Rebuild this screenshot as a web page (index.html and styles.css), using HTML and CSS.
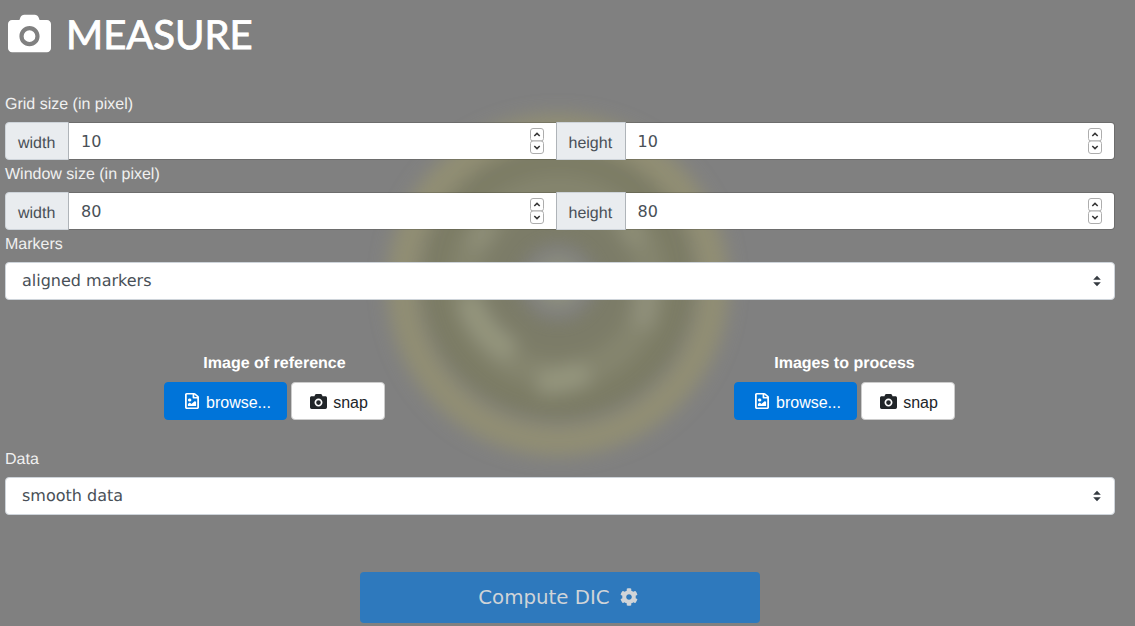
FILE: index.html
```html
<!DOCTYPE html>
<html lang="en">
<head>
<meta charset="utf-8">
<title>Measure</title>
<link rel="stylesheet" href="styles.css">
</head>
<body>
<svg class="defs" aria-hidden="true">
  <defs>
    <symbol id="i-camera" viewBox="0 0 512 512"><path d="M512 144v288c0 26.5-21.5 48-48 48H48c-26.5 0-48-21.5-48-48V144c0-26.5 21.5-48 48-48h88l12.3-32.9c7-18.7 24.9-31.1 44.9-31.1h125.5c20 0 37.9 12.4 44.9 31.1L376 96h88c26.5 0 48 21.5 48 48zM376 288c0-66.2-53.8-120-120-120s-120 53.8-120 120 53.8 120 120 120 120-53.8 120-120zM326 288a70 70 0 1 1-140 0 70 70 0 1 1 140 0z"/></symbol>
    <symbol id="i-file" viewBox="0 0 384 512" preserveAspectRatio="none"><path d="M369.9 97.9L286 14C277 5 264.8-.1 252.1-.1H48C21.5 0 0 21.5 0 48v416c0 26.5 21.5 48 48 48h288c26.5 0 48-21.5 48-48V131.9c0-12.7-5.1-25-14.1-34zM332.1 128H256V51.9l76.1 76.1zM48 464V48h160v104c0 13.3 10.7 24 24 24h104v288H48zm32-48h224V288l-23.5-23.5c-4.7-4.7-12.3-4.7-17 0L176 352l-39.5-39.5c-4.7-4.7-12.3-4.7-17 0L80 352v64zm48-240c-26.5 0-48 21.5-48 48s21.5 48 48 48 48-21.5 48-48-21.5-48-48-48z"/></symbol>
    <symbol id="i-cog" viewBox="0 0 512 512"><path d="M487.4 315.7l-42.6-24.6c4.3-23.2 4.3-47 0-70.2l42.6-24.6c4.9-2.8 7.1-8.6 5.5-14-11.1-35.6-30-67.8-54.7-94.6-3.8-4.1-10-5.1-14.8-2.3L380.8 110c-17.9-15.4-38.5-27.3-60.8-35.1V25.8c0-5.6-3.9-10.5-9.4-11.7-36.7-8.2-74.3-7.8-109.2 0-5.5 1.2-9.4 6.1-9.4 11.7V75c-22.2 7.9-42.8 19.8-60.8 35.1L88.7 85.5c-4.9-2.8-11-1.9-14.8 2.3-24.7 26.7-43.6 58.9-54.7 94.6-1.7 5.4.6 11.2 5.5 14L67.3 221c-4.3 23.2-4.3 47 0 70.2l-42.6 24.6c-4.9 2.8-7.1 8.6-5.5 14 11.1 35.6 30 67.8 54.7 94.6 3.8 4.1 10 5.1 14.8 2.3l42.6-24.6c17.9 15.4 38.5 27.3 60.8 35.1v49.2c0 5.6 3.9 10.5 9.4 11.7 36.7 8.2 74.3 7.8 109.2 0 5.5-1.2 9.4-6.1 9.4-11.7v-49.2c22.2-7.9 42.8-19.8 60.8-35.1l42.6 24.6c4.9 2.8 11 1.9 14.8-2.3 24.7-26.7 43.6-58.9 54.7-94.6 1.5-5.5-.7-11.3-5.6-14.1zM256 336c-44.1 0-80-35.9-80-80s35.9-80 80-80 80 35.9 80 80-35.9 80-80 80z"/></symbol>
    <symbol id="i-spin" viewBox="0 0 14 26">
      <rect x="0.5" y="0.5" width="13" height="12.5" rx="2.5" fill="#fff" stroke="#adadad"/>
      <rect x="0.5" y="13" width="13" height="12.5" rx="2.5" fill="#fff" stroke="#adadad"/>
      <path d="M4.3 8 7 5.4 9.7 8" fill="none" stroke="#333" stroke-width="1.5"/>
      <path d="M4.3 18 7 20.6 9.7 18" fill="none" stroke="#333" stroke-width="1.5"/>
    </symbol>
    <symbol id="i-sort" viewBox="0 0 10 12">
      <path d="M5 .8 8.8 4.8H1.2zM5 11.2 1.2 7.2H8.8z"/>
    </symbol>
    <filter id="soft" x="-20%" y="-20%" width="140%" height="140%"><feGaussianBlur stdDeviation="9"/></filter>
  </defs>
</svg>

<svg class="backdrop" viewBox="0 0 400 400" aria-hidden="true">
  <g filter="url(#soft)" fill="none">
    <circle cx="200" cy="200" r="156" stroke="#918e73" stroke-width="30"/>
    <g transform="translate(0 -3)">
      <circle cx="200" cy="200" r="122" stroke="#7c7b65" stroke-width="32"/>
      <circle cx="200" cy="200" r="92" stroke="#85856e" stroke-width="30"/>
      <circle cx="200" cy="200" r="58" stroke="#7b7c67" stroke-width="40"/>
      <circle cx="200" cy="200" r="24" fill="#8f917d"/>
      <path d="M110 215a92 92 0 0 0 45 55" stroke="#94957e" stroke-width="24"/>
      <path d="M285 195a88 88 0 0 1-2 50" stroke="#90907a" stroke-width="24"/>
      <path d="M180 300a100 100 0 0 0 50-10" stroke="#94957e" stroke-width="24"/>
      <path d="M115 165a92 92 0 0 1 20-22" stroke="#8f8f78" stroke-width="20"/>
      <path d="M265 140a92 92 0 0 1 15 22" stroke="#8f8f78" stroke-width="20"/>
    </g>
  </g>
</svg>

<main class="page">
  <h1 class="title">
    <svg class="title-icon"><use href="#i-camera"/></svg>
    <span>MEASURE</span>
  </h1>

  <label class="label">Grid size (in pixel)</label>
  <div class="group">
    <span class="addon addon-first">width</span>
    <div class="field"><input class="input" type="text" value="10"><svg class="spin"><use href="#i-spin"/></svg></div>
    <span class="addon">height</span>
    <div class="field field-last"><input class="input input-last" type="text" value="10"><svg class="spin"><use href="#i-spin"/></svg></div>
  </div>

  <label class="label">Window size (in pixel)</label>
  <div class="group">
    <span class="addon addon-first">width</span>
    <div class="field"><input class="input" type="text" value="80"><svg class="spin"><use href="#i-spin"/></svg></div>
    <span class="addon">height</span>
    <div class="field field-last"><input class="input input-last" type="text" value="80"><svg class="spin"><use href="#i-spin"/></svg></div>
  </div>

  <label class="label">Markers</label>
  <div class="select-box">
    <span>aligned markers</span>
    <svg class="sort"><use href="#i-sort"/></svg>
  </div>

  <section class="uploads">
    <div class="upload">
      <h2 class="upload-title">Image of reference</h2>
      <div class="actions">
        <button class="btn btn-blue" type="button"><svg class="btn-file"><use href="#i-file"/></svg>browse...</button>
        <button class="btn btn-white" type="button"><svg class="btn-cam"><use href="#i-camera"/></svg>snap</button>
      </div>
    </div>
    <div class="upload">
      <h2 class="upload-title">Images to process</h2>
      <div class="actions">
        <button class="btn btn-blue" type="button"><svg class="btn-file"><use href="#i-file"/></svg>browse...</button>
        <button class="btn btn-white" type="button"><svg class="btn-cam"><use href="#i-camera"/></svg>snap</button>
      </div>
    </div>
  </section>

  <label class="label">Data</label>
  <div class="select-box">
    <span>smooth data</span>
    <svg class="sort"><use href="#i-sort"/></svg>
  </div>

  <div class="submit-row">
    <button class="compute" type="button">Compute DIC<svg class="cog"><use href="#i-cog"/></svg></button>
  </div>
</main>
</body>
</html>
```

FILE: styles.css
```css
* { box-sizing: border-box; }

html, body {
  margin: 0;
  height: 100%;
  overflow: hidden;
}

body {
  position: relative;
  background: #808080;
  color: #f0f0f0;
  font-family: "Liberation Sans", Arial, sans-serif;
  font-size: 16px;
  line-height: 24px;
  text-rendering: geometricPrecision;
}

.defs { width: 0; height: 0; position: absolute; }

.backdrop {
  position: absolute;
  left: 358px;
  top: 85px;
  width: 400px;
  height: 400px;
}

.page {
  position: relative;
  width: 1110px;
  margin-left: 5px;
}

.title {
  display: flex;
  align-items: center;
  gap: 15px;
  height: 90px;
  margin: 0;
  padding: 0 0 23px 3px;
  font-family: Lato, sans-serif;
  font-size: 40px;
  font-weight: 400;
  line-height: 48px;
  color: #fff;
  -webkit-text-stroke: 0.9px #fff;
}

.title-icon { width: 43px; height: 43px; fill: #fff; }

.label {
  display: block;
  height: 24px;
  margin-bottom: 8px;
  padding-top: 3px;
  font-size: 16px;
}

.group { display: flex; height: 38px; }

.addon {
  display: flex;
  align-items: center;
  width: 70px;
  padding: 5px 12px 0;
  background: #e9ecef;
  border: 1px solid #ced4da;
  color: #495057;
}

.addon-first { width: 64px; border-radius: 4px 0 0 4px; }

.field { position: relative; flex: 1 1 0; margin: 0 -1px; min-width: 0; z-index: 1; }
.field-last { flex-basis: 2px; margin-right: 0; }

.input {
  display: block;
  width: 100%;
  height: 38px;
  padding: 6px 12px;
  border: 1px solid rgba(0, 0, 0, 0.15);
  background: #fff padding-box;
  color: #495057;
  font-family: "DejaVu Sans", sans-serif;
  font-size: 16px;
  outline: 0;
}

.input-last { border-radius: 0 4px 4px 0; }

.spin {
  position: absolute;
  right: 13px;
  top: 6px;
  width: 14px;
  height: 26px;
}

.select-box {
  display: flex;
  align-items: center;
  justify-content: space-between;
  height: 38px;
  padding: 0 12px 0 16px;
  background: #fff;
  border: 1px solid #ced4da;
  border-radius: 4px;
  color: #495057;
  font-family: "DejaVu Sans", sans-serif;
  font-size: 16px;
}

.sort { width: 10px; height: 12px; fill: #343a40; }

.uploads {
  display: grid;
  grid-template-columns: 1fr 1fr;
  gap: 30px;
  margin-top: 52px;
  margin-bottom: 25px;
}

.upload { display: flex; flex-direction: column; align-items: center; padding-right: 1px; }

.upload-title {
  margin: 0 0 6px;
  font-size: 16px;
  font-weight: 700;
  line-height: 24px;
  color: #fff;
}

.actions { display: flex; gap: 4px; }

.btn {
  display: inline-flex;
  align-items: center;
  justify-content: center;
  height: 38px;
  border-radius: 4px;
  font-family: "Liberation Sans", Arial, sans-serif;
  font-size: 16px;
  padding: 4px 0 0;
}

.btn-blue { width: 123px; padding-left: 5px; background: #0074d9; border: 1px solid #0074d9; color: #fff; }
.btn-white { width: 94px; padding-left: 2px; background: #fff; border: 1px solid #ccc; color: #212529; }

.btn-file { width: 14px; height: 16px; margin: -4px 7px 0 0; fill: #fff; }
.btn-cam { width: 17px; height: 17px; margin: -4px 6px 0 0; fill: #212529; }

.submit-row { display: flex; justify-content: center; margin-top: 57px; }

.compute {
  display: flex;
  align-items: center;
  justify-content: center;
  width: 400px;
  height: 51px;
  padding: 0 4px 1px 0;
  background: #2e79bd;
  border: 0;
  border-radius: 4px;
  color: #d0d4d8;
  font-family: "DejaVu Sans", sans-serif;
  font-size: 19.8px;
}

.cog { width: 18px; height: 18px; margin-left: 10px; fill: #d0d4d8; }
```
